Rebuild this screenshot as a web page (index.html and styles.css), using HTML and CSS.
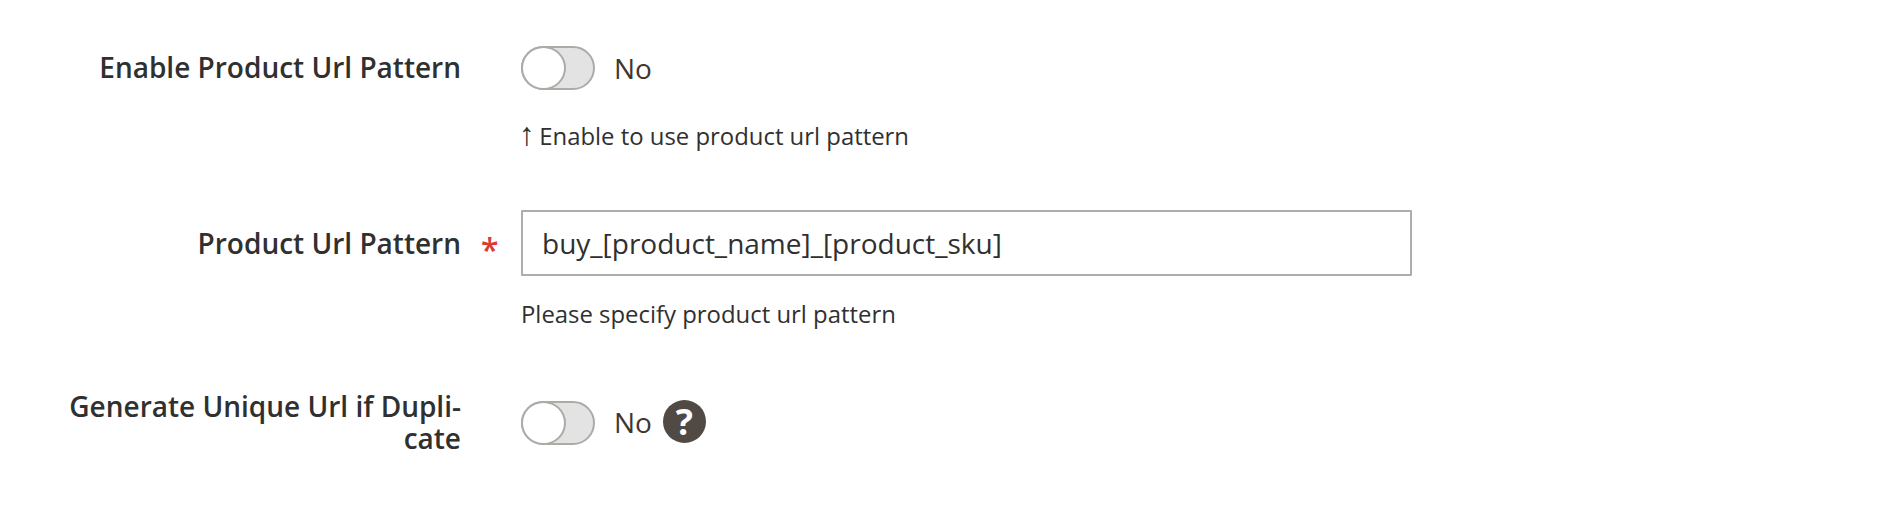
FILE: index.html
```html
<!DOCTYPE html>
<html lang="en">
<head>
<meta charset="utf-8">
<title>Product Url Pattern</title>
<link rel="stylesheet" href="styles.css">
</head>
<body>
<form class="form">
  <div class="field field-first">
    <div class="label">Enable Product Url Pattern</div>
    <div class="mark"></div>
    <div class="control">
      <div class="switch-row">
        <span class="toggle"><span class="knob"></span></span>
        <span class="state">No</span>
      </div>
      <p class="note note-toggle"><span class="arrow">↑</span> Enable to use product url pattern</p>
    </div>
  </div>
  <div class="field field-input">
    <div class="label label-input">Product Url Pattern</div>
    <div class="mark"><span class="star">*</span></div>
    <div class="control">
      <div class="input">buy_[product_name]_[product_sku]</div>
      <p class="note note-input">Please specify product url pattern</p>
    </div>
  </div>
  <div class="field field-last">
    <div class="label label-wrap">Generate Unique Url if Dupli-<br>cate</div>
    <div class="mark"></div>
    <div class="control control-last">
      <div class="switch-row">
        <span class="toggle"><span class="knob"></span></span>
        <span class="state state-last">No</span>
        <span class="help">?</span>
      </div>
    </div>
  </div>
</form>
</body>
</html>
```
FILE: styles.css
```css
* { box-sizing: border-box; }
html, body { margin: 0; padding: 0; background: #fff; }
body {
  width: 1886px;
  height: 506px;
  overflow: hidden;
  font-family: "Open Sans", sans-serif;
  color: #303030;
}
.form { display: flex; flex-direction: column; padding-top: 46px; }
.field {
  display: grid;
  grid-template-columns: 461px 60px 891px;
}
.field-input { margin-top: 58px; }
.field-last { margin-top: 60px; }
.control-last { padding-top: 11px; }
.label {
  font-size: 28px;
  font-weight: 600;
  line-height: 32px;
  text-align: right;
  color: #303030;
  padding-top: 5px;
}
.label-input { padding-top: 17px; }
.label-wrap { padding-top: 0; }
.mark { display: flex; justify-content: flex-start; }
.star {
  color: #dc3a30;
  font-size: 32px;
  font-weight: 600;
  line-height: 44px;
  padding: 18px 0 0 20px;
}
.switch-row { display: flex; align-items: center; height: 44px; }
.toggle {
  display: block;
  width: 74px;
  height: 44px;
  border: 2px solid #adaba6;
  border-radius: 22px;
  background: #e3e3e3;
}
.knob {
  display: block;
  width: 45px;
  height: 44px;
  margin: -2px 0 0 -2px;
  border: 2px solid #adaba6;
  border-radius: 50%;
  background: #fff;
}
.state {
  margin-left: 19px;
  font-size: 28px;
  line-height: 44px;
  color: #41362f;
}
.state-last { padding-bottom: 2px; }
.help {
  display: flex;
  align-items: center;
  justify-content: center;
  width: 43px;
  height: 43px;
  margin: -4px 0 0 11px;
  border-radius: 50%;
  background: #514943;
  color: #fff;
  font-size: 36px;
  font-weight: 700;
  line-height: 43px;
}
.note {
  margin: 0;
  font-size: 23.9px;
  line-height: 32px;
  color: #303030;
}
.note-toggle { margin-top: 30px; }
.note-input { margin-top: 22px; }
.arrow {
  font-family: "Liberation Sans", sans-serif;
  font-size: 32px;
  line-height: 0;
  margin-left: -2px;
  letter-spacing: -2px;
}
.input {
  width: 891px;
  height: 66px;
  border: 2px solid #adadad;
  border-radius: 1px;
  padding: 0 19px;
  font-size: 28px;
  line-height: 62px;
  color: #303030;
  background: #fff;
}
```
